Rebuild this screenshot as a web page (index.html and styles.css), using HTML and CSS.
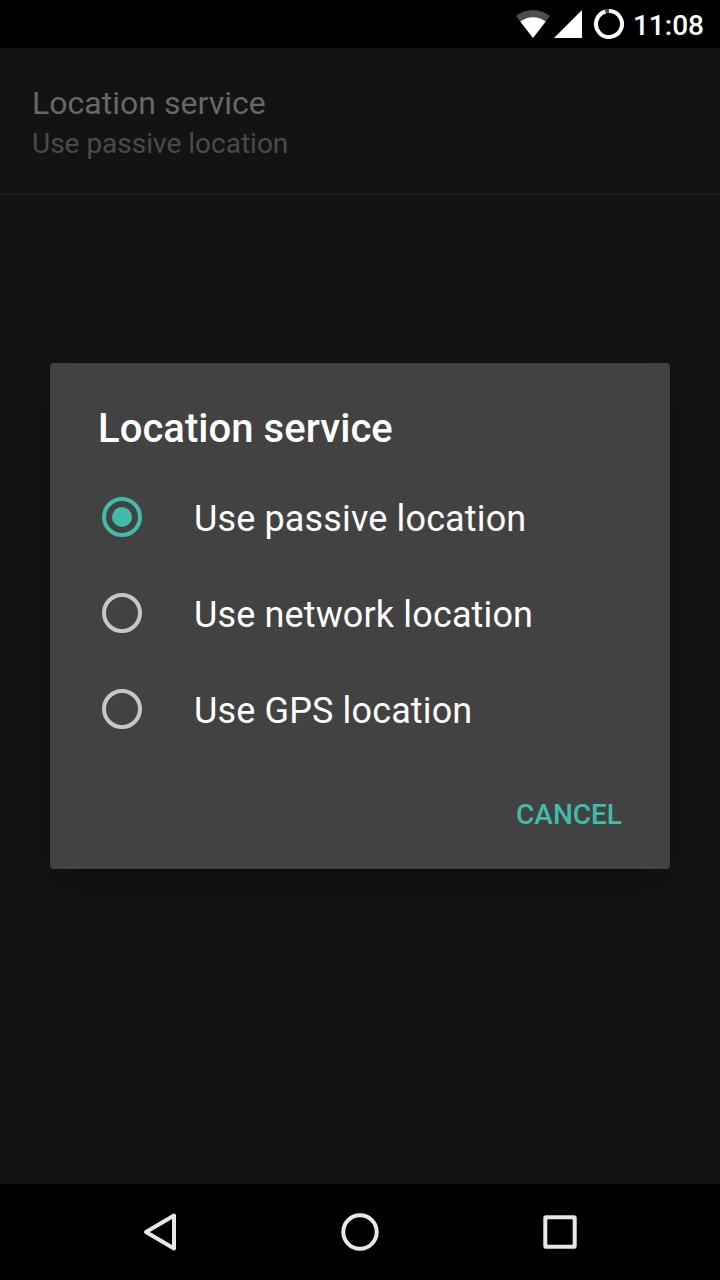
FILE: index.html
```html
<!DOCTYPE html>
<html lang="en">
<head>
<meta charset="utf-8">
<title>Location service</title>
<link rel="stylesheet" href="styles.css">
</head>
<body>
<div class="screen">
  <header class="status-bar">
    <svg class="wifi" width="34" height="28" viewBox="0 0 34 28">
      <path fill="#4d4d4d" d="M0 6C9.800-2 24.200-2 34 6L17 28Z"/>
      <path fill="#fff" d="M4.300 11.600C12 5.700 22 5.700 29.700 11.600L17 28Z"/>
    </svg>
    <svg class="signal" width="28" height="28" viewBox="0 0 28 28"><path fill="#fff" d="M0 28H28V0Z"/></svg>
    <svg class="battery" width="30" height="30" viewBox="0 0 30 30" fill="none" stroke-width="4">
      <path d="M15 2A13 13 0 1 1 11.500 2.480" stroke="#fff"/>
      <path d="M11.500 2.480A13 13 0 0 1 15 2" stroke="#4d4d4d"/>
    </svg>
    <span class="clock">11:08</span>
  </header>
  <main class="content">
    <div class="preference">
      <div class="pref-title">Location service</div>
      <div class="pref-summary">Use passive location</div>
    </div>
    <section class="dialog">
      <h1 class="dialog-title">Location service</h1>
      <div class="option"><span class="radio checked"></span><span class="label">Use passive location</span></div>
      <div class="option"><span class="radio"></span><span class="label">Use network location</span></div>
      <div class="option"><span class="radio"></span><span class="label">Use GPS location</span></div>
      <div class="actions"><span class="cancel">CANCEL</span></div>
    </section>
  </main>
  <nav class="nav-bar">
    <svg width="40" height="40" viewBox="0 0 40 40"><path d="M34 3.500V36.500L6 20Z"/></svg>
    <svg width="40" height="40" viewBox="0 0 40 40"><circle cx="20" cy="20" r="16.700"/></svg>
    <svg width="40" height="40" viewBox="0 0 40 40"><rect x="5.300" y="5.300" width="29.400" height="29.400" rx=".8"/></svg>
  </nav>
</div>
</body>
</html>
```
FILE: styles.css
```css
body {
  margin: 0;
  background: #000;
  font-family: Roboto, sans-serif;
}

.screen {
  width: 720px;
  height: 1280px;
  display: flex;
  flex-direction: column;
  overflow: hidden;
}

.status-bar {
  height: 48px;
  box-sizing: border-box;
  padding-right: 16px;
  background: #000;
  display: flex;
  align-items: center;
  justify-content: flex-end;
}

.signal { margin-left: 4px; }
.battery { margin-left: 12px; }

.clock {
  margin-left: 9px;
  color: #fff;
  font-size: 28px;
  font-weight: 500;
  line-height: 34px;
  padding-top: 4px;
}

.content {
  flex: 1;
  background: #131313;
}

.preference {
  height: 147px;
  box-sizing: border-box;
  padding: 36px 32px 0;
  border-bottom: 2px solid #1d1d1d;
}

.pref-title {
  color: #676767;
  font-size: 32px;
  line-height: 38px;
  letter-spacing: .03px;
}

.pref-summary {
  margin-top: 5px;
  color: #4a4a4a;
  font-size: 28px;
  line-height: 33px;
}

.dialog {
  width: 620px;
  height: 506px;
  margin: 168px auto 0;
  box-sizing: border-box;
  padding: 42px 48px 0;
  background: #424242;
  border-radius: 4px;
  box-shadow: 0 16px 40px rgba(0, 0, 0, .3);
}

.dialog-title {
  margin: 0 0 17px;
  color: #fff;
  font-size: 40px;
  font-weight: 500;
  line-height: 47px;
  letter-spacing: .05px;
}

.option {
  height: 96px;
  display: flex;
  align-items: center;
  color: #fff;
  font-size: 36px;
}

.radio {
  position: relative;
  width: 40px;
  height: 40px;
  box-sizing: border-box;
  margin: 0 52px 0 4px;
  border: 4px solid #c6c6c6;
  border-radius: 50%;
}

.checked { border-color: #41bbaa; }

.checked::after {
  content: "";
  position: absolute;
  inset: 6px;
  border-radius: 50%;
  background: #41bbaa;
}

.label {
  line-height: 42px;
  padding-top: 4px;
  letter-spacing: .14px;
}

.actions {
  display: flex;
  justify-content: flex-end;
  padding-top: 41px;
}

.cancel {
  color: #41bbaa;
  font-size: 28px;
  font-weight: 500;
  line-height: 33px;
}

.nav-bar {
  height: 96px;
  display: flex;
  align-items: center;
  justify-content: center;
  gap: 160px;
  background: #000;
}

.nav-bar svg {
  fill: none;
  stroke: #e8e8e8;
  stroke-width: 4;
  stroke-linejoin: round;
}
```
